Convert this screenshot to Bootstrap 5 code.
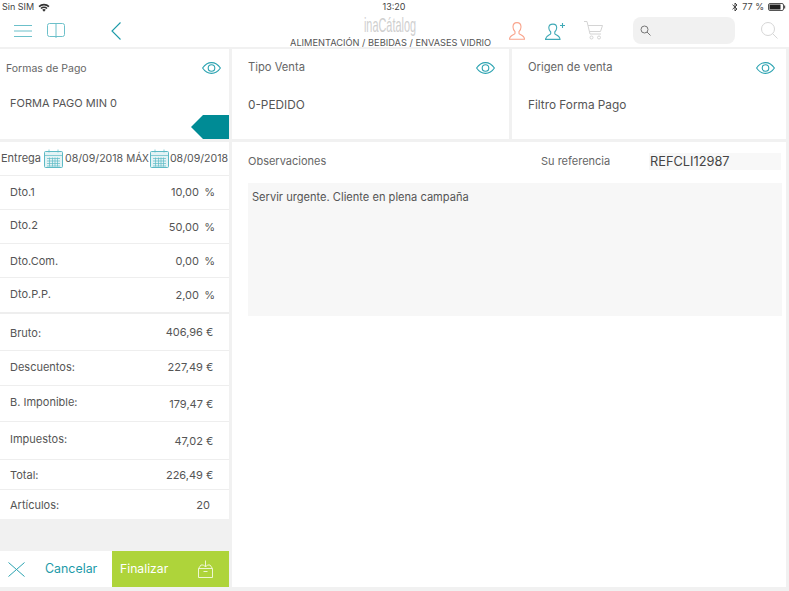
<!DOCTYPE html>
<html lang="es">
<head>
<meta charset="UTF-8">
<title>Pedido</title>
<link href="https://cdn.jsdelivr.net/npm/bootstrap@5.3.3/dist/css/bootstrap.min.css" rel="stylesheet">
<style>
html, body { width: 789px; height: 591px; overflow: hidden; }
body { background: #f1f1f1; color: #555; font-family: Inter, "Liberation Sans", sans-serif; font-size: 11px; }
svg { display: block; flex: none; }
.status-bar { height: 14px; background: #fff; color: #444; font-size: 9px; padding: 0 3px 0 2px; }
.status-side { flex: 1 1 0; }
.tool-bar { height: 33px; background: #fff; padding-left: 14px; }
.ml-15 { margin-left: 15px; }
.ml-46 { margin-left: 46px; }
.ml-19 { margin-left: 19px; }
.ml-20 { margin-left: 20px; }
.ml-26 { margin-left: 26px; }
.title-box { width: 200px; margin-left: 169px; margin-top: 2px; }
.logo-text { font-family: "Liberation Sans", sans-serif; font-size: 21px; line-height: 18px; color: #cfcfcf; transform: scaleX(.52); }
.sub-text { font-size: 9.25px; line-height: 11px; color: #555; white-space: nowrap; margin-top: 3px; }
.search-pill { width: 102px; height: 27px; margin-left: 30px; background: #f1f1f1; border-radius: 8px; padding-left: 7px; }
.main-area { margin-top: 2px; width: 786px; height: 538px; gap: 3px; }
.top-row { height: 90px; gap: 3px; }
.bottom-row { height: 445px; gap: 3px; }
.left-col { width: 229px; flex: none; }
.info-card { background: #fff; padding: 11px 11px 0 16px; }
.info-card.first { padding: 13px 8px 0 6px; }
.mid-card { width: 277px; flex: none; padding-right: 14px; }
.eye-icon { margin-top: 2px; }
.first .eye-icon { margin-top: 0; }
.card-label { font-size: 11.2px; line-height: 14px; color: #666; }
.first .card-label { font-size: 10.5px; }
.card-value { font-size: 11.8px; line-height: 14px; color: #555; margin-top: 24px; }
.first .card-value { margin-left: 4px; margin-top: 20px; font-size: 11px; }
.tab-arrow { width: 38px; height: 24px; margin: auto -8px 0 auto; background: #008b95; clip-path: polygon(12px 0, 100% 0, 100% 100%, 12px 100%, 0 50%); }
.dates-row { height: 34px; background: #fff; font-size: 10.6px; white-space: nowrap; padding-left: 1px; border-bottom: 1px solid #eee; }
.dates-row .entrega { font-size: 11px; }
.dates-row .maximo { font-size: 10px; margin-left: 3px; }
.cal-first { margin: 0 2px 0 3px; }
.cal-second { margin: 0 1px 0 1px; }
.stat-row { background: #fff; padding: 0 14px 0 10px; border-bottom: 1px solid #eee; font-size: 11px; line-height: 14px; }
.stat-row.thick { border-bottom: 2px solid #eee; }
.stat-row.last { border-bottom: 0; }
.h-29 { height: 29px; }
.h-30 { height: 30px; }
.h-34 { height: 34px; }
.h-35 { height: 35px; }
.h-36 { height: 36px; }
.h-37 { height: 37px; }
.h-38 { height: 38px; }
.stat-value { width: 90px; text-align: right; color: #555; }
.unit-pct, .unit-eur, .unit-none { display: inline-block; text-align: right; }
.unit-pct { width: 13px; }
.unit-eur { width: 9px; padding-right: 2px; }
.unit-none { width: 2px; }
.up-1 { padding-bottom: 2px; }
.up-2 { padding-bottom: 4px; }
.down-1 { padding-top: 2px; }
.stat-gap { background: #f1f1f1; }
.action-row { height: 36px; background: #fff; }
.cancel-btn { width: 112px; color: #1c9aa8; font-size: 12.4px; padding-left: 8px; }
.cancel-btn span { margin-left: 20px; }
.finish-btn { flex: 1 1 auto; background: #aed43a; color: #fff; font-size: 12.2px; padding: 0 16px 0 8px; }
.right-panel { background: #fff; padding: 11px 4px 0 16px; }
.obs-head { height: 17px; font-size: 11px; color: #666; }
.ref-label { margin-left: auto; width: 108px; }
.ref-box { width: 132px; height: 17px; background: #f8f8f8; color: #444; font-size: 12.8px; line-height: 17px; padding-left: 1px; margin-right: 1px; }
.obs-box { height: 133px; margin-top: 13px; background: #f7f7f7; color: #555; padding: 7px 4px; font-size: 11.1px; line-height: 14px; }
</style>
</head>
<body>
<div class="status-bar d-flex align-items-center">
    <div class="status-side d-flex align-items-center gap-1">
        <span>Sin SIM</span>
        <svg width="12" height="9" viewBox="0 0 12 9"><path d="M.5 3a8 8 0 0 1 11 0L10.4 4.2a6.4 6.4 0 0 0-8.8 0zM2.4 5a5.2 5.2 0 0 1 7.2 0L8.5 6.1a3.6 3.6 0 0 0-5 0zM4.2 6.8a2.6 2.6 0 0 1 3.6 0L6 8.7z" fill="#333"/></svg>
    </div>
    <div>13:20</div>
    <div class="status-side d-flex align-items-center justify-content-end gap-1">
        <svg width="6" height="10" viewBox="0 0 6 10"><path d="M.5 2.7 5 7 3 9V1l2 2L.5 7.3" fill="none" stroke="#333" stroke-width=".9"/></svg>
        <span>77 %</span>
        <svg width="18" height="8" viewBox="0 0 18 8"><rect x=".5" y=".5" width="15" height="7" rx="1.5" fill="none" stroke="#555"/><rect x="1.5" y="1.5" width="11" height="5" fill="#222"/><rect x="16" y="2.5" width="1.2" height="3" fill="#555"/></svg>
    </div>
</div>

<div class="tool-bar d-flex align-items-center">
    <svg width="18" height="14" viewBox="0 0 18 14" fill="none" stroke="#6cc0ca"><path d="M0 1.500h18M0 7h18M0 12.500h18"/></svg>
    <svg class="ml-15" width="18" height="15" viewBox="0 0 18 15" fill="none" stroke="#6cc0ca"><rect x=".5" y=".5" width="17" height="13" rx="2"/><path d="M9 .5V15"/></svg>
    <svg class="ml-46" width="10" height="18" viewBox="0 0 10 18" fill="none" stroke="#1c9aa8" stroke-width="1.1"><path d="M9.500.5 1 9l8.500 8.500"/></svg>
    <div class="title-box text-center">
        <div class="logo-text">inaCátalog</div>
        <div class="sub-text">ALIMENTACIÓN / BEBIDAS / ENVASES VIDRIO</div>
    </div>
    <svg class="ml-19" width="16" height="18" viewBox="0 0 16 18" fill="none" stroke="#f9a48c" stroke-width="1.1"><path d="M8 .6c2.600 0 4 2 4 4.400 0 2-1 3.600-2 4.600v2c0 1 5.400 1.600 5.500 5.600H.5C.6 13.200 6 12.600 6 11.600v-2C5 8.600 4 7 4 5 4 2.600 5.400.6 8 .6z"/></svg>
    <svg class="ml-20" width="20" height="18" viewBox="0 0 20 18" fill="none" stroke="#3fa9b6" stroke-width="1.1"><path d="M8 2.100c2.400 0 3.700 1.500 3.700 3.700 0 1.800-.9 3.200-1.900 4.200v1.800c0 1 5.200 1.600 5.200 5.600H.5c.1-4 5.200-4.600 5.200-5.600V10c-1-1-1.900-2.400-1.900-4.200 0-2.200 1.500-3.700 4.200-3.700zM15 3.500h5M17.500 1v5"/></svg>
    <svg class="ml-19" width="19" height="19" viewBox="0 0 19 19" fill="none" stroke="#d4d4d4"><path d="M0 .5h3l3 12.500h11M4 4.500h14.500l-2 6H5.500"/><circle cx="7.500" cy="16.500" r="1.500"/><circle cx="15" cy="16.500" r="1.500"/></svg>
    <div class="search-pill d-flex align-items-center">
        <svg width="11" height="11" viewBox="0 0 11 11" fill="none" stroke="#777"><circle cx="4.500" cy="4.500" r="3.500"/><path d="m7 7 3.500 3.500"/></svg>
    </div>
    <svg class="ml-26" width="17" height="17" viewBox="0 0 17 17" fill="none" stroke="#d6d6d6"><circle cx="7" cy="7" r="6.500"/><path d="m11.500 11.500 5 5"/></svg>
</div>

<div class="main-area d-flex flex-column">
    <div class="top-row d-flex">
        <div class="info-card first left-col d-flex flex-column">
            <div class="d-flex justify-content-between align-items-start">
                <div class="card-label">Formas de Pago</div>
                <svg class="eye-icon" width="19" height="12" viewBox="0 0 19 12" fill="none" stroke="#2ba3b1" stroke-width="1.100"><path d="M.6 6C3 2.400 6 .6 9.500.6s6.500 1.800 8.900 5.400c-2.400 3.600-5.400 5.400-8.900 5.400S3 9.600.6 6z"/><circle cx="9.500" cy="6" r="3.300"/></svg>
            </div>
            <div class="card-value">FORMA PAGO MIN 0</div>
            <div class="tab-arrow"></div>
        </div>
        <div class="info-card mid-card">
            <div class="d-flex justify-content-between align-items-start">
                <div class="card-label">Tipo Venta</div>
                <svg class="eye-icon" width="19" height="12" viewBox="0 0 19 12" fill="none" stroke="#2ba3b1" stroke-width="1.100"><path d="M.6 6C3 2.400 6 .6 9.500.6s6.500 1.800 8.900 5.400c-2.400 3.600-5.400 5.400-8.900 5.400S3 9.600.6 6z"/><circle cx="9.500" cy="6" r="3.300"/></svg>
            </div>
            <div class="card-value">0-PEDIDO</div>
        </div>
        <div class="info-card flex-grow-1">
            <div class="d-flex justify-content-between align-items-start">
                <div class="card-label">Origen de venta</div>
                <svg class="eye-icon" width="19" height="12" viewBox="0 0 19 12" fill="none" stroke="#2ba3b1" stroke-width="1.100"><path d="M.6 6C3 2.400 6 .6 9.500.6s6.500 1.800 8.900 5.400c-2.400 3.600-5.400 5.400-8.900 5.400S3 9.600.6 6z"/><circle cx="9.500" cy="6" r="3.300"/></svg>
            </div>
            <div class="card-value">Filtro Forma Pago</div>
        </div>
    </div>

    <div class="bottom-row d-flex">
        <div class="left-col d-flex flex-column">
            <div class="dates-row d-flex align-items-center">
                <span class="entrega">Entrega</span>
                <svg class="cal-first" width="19" height="19" viewBox="0 0 19 19" fill="#e4f3f5" stroke="#5dbac5"><rect x=".5" y="2.500" width="18" height="16" rx="1"/><path d="M.5 6.500h18M5 .5v3M14 .5v3M3 9.500h13M3 12h13M3 14.500h13M3 17h13M5.500 8.500v9M8.500 8.500v9M11 8.500v9M13.500 8.500v9" stroke-width=".7"/></svg>
                <span>08/09/2018</span>
                <span class="maximo">MÁX</span>
                <svg class="cal-second" width="19" height="19" viewBox="0 0 19 19" fill="#e4f3f5" stroke="#5dbac5"><rect x=".5" y="2.500" width="18" height="16" rx="1"/><path d="M.5 6.500h18M5 .5v3M14 .5v3M3 9.500h13M3 12h13M3 14.500h13M3 17h13M5.500 8.500v9M8.500 8.500v9M11 8.500v9M13.500 8.500v9" stroke-width=".7"/></svg>
                <span>08/09/2018</span>
            </div>
            <div class="stat-row h-34 d-flex align-items-center justify-content-between"><span class="up-1">Dto.1</span><span class="stat-value up-1">10,00 <span class="unit-pct">%</span></span></div>
            <div class="stat-row h-34 d-flex align-items-center justify-content-between"><span class="up-2">Dto.2</span><span class="stat-value">50,00 <span class="unit-pct">%</span></span></div>
            <div class="stat-row h-34 d-flex align-items-center justify-content-between"><span>Dto.Com.</span><span class="stat-value">0,00 <span class="unit-pct">%</span></span></div>
            <div class="stat-row thick h-36 d-flex align-items-center justify-content-between"><span class="up-1">Dto.P.P.</span><span class="stat-value">2,00 <span class="unit-pct">%</span></span></div>
            <div class="stat-row h-37 d-flex align-items-center justify-content-between"><span class="down-1">Bruto:</span><span class="stat-value">406,96 <span class="unit-eur">€</span></span></div>
            <div class="stat-row h-35 d-flex align-items-center justify-content-between"><span class="up-1">Descuentos:</span><span class="stat-value up-1">227,49 <span class="unit-eur">€</span></span></div>
            <div class="stat-row h-36 d-flex align-items-center justify-content-between"><span class="up-2">B. Imponible:</span><span class="stat-value">179,47 <span class="unit-eur">€</span></span></div>
            <div class="stat-row h-38 d-flex align-items-center justify-content-between"><span class="up-2">Impuestos:</span><span class="stat-value">47,02 <span class="unit-eur">€</span></span></div>
            <div class="stat-row h-30 d-flex align-items-center justify-content-between"><span>Total:</span><span class="stat-value">226,49 <span class="unit-eur">€</span></span></div>
            <div class="stat-row last h-29 d-flex align-items-center justify-content-between"><span>Artículos:</span><span class="stat-value">20 <span class="unit-none"></span></span></div>
            <div class="stat-gap flex-grow-1"></div>
            <div class="action-row d-flex">
                <div class="cancel-btn d-flex align-items-center">
                    <svg width="17" height="15" viewBox="0 0 17 15" fill="none" stroke="#2ba3b1"><path d="m.5.500 16 14M16.500.500l-16 14"/></svg>
                    <span>Cancelar</span>
                </div>
                <div class="finish-btn d-flex align-items-center justify-content-between">
                    <span>Finalizar</span>
                    <svg width="15" height="18" viewBox="0 0 15 18" fill="none" stroke="#eef6d2"><path d="M3 5 .5 8.500v9h14v-9L12 5h-2.500M5.500 5H3M.5 8.500h14M5.500 11.500h4M7.500 .5V7M5.500 5 7.500 7l2-2"/></svg>
                </div>
            </div>
        </div>
        <div class="right-panel flex-grow-1">
            <div class="obs-head d-flex align-items-center">
                <span>Observaciones</span>
                <span class="ref-label">Su referencia</span>
                <div class="ref-box">REFCLI12987</div>
            </div>
            <div class="obs-box">Servir urgente. Cliente en plena campaña</div>
        </div>
    </div>
</div>
</body>
</html>
